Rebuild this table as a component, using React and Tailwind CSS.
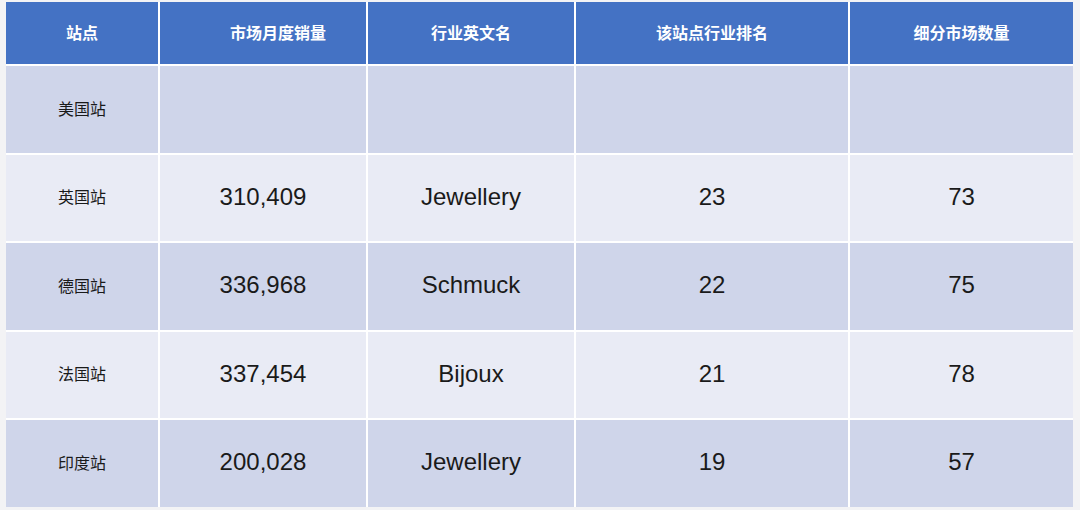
const headers = ["站点", "市场月度销量", "行业英文名", "该站点行业排名", "细分市场数量"];

const rows = [
  ["美国站", "", "", "", ""],
  ["英国站", "310,409", "Jewellery", "23", "73"],
  ["德国站", "336,968", "Schmuck", "22", "75"],
  ["法国站", "337,454", "Bijoux", "21", "78"],
  ["印度站", "200,028", "Jewellery", "19", "57"],
];

const cjk = { fontFamily: '"Noto Sans CJK SC", "Liberation Sans", sans-serif' };
const num = { fontFamily: '"Liberation Sans", Arial, sans-serif' };

export default function App() {
  return (
    <div className="w-[1080px] h-[510px] bg-[#f3f3f5] pt-[2px] pl-[6px] overflow-hidden">
      <div className="w-[1067px] bg-white grid grid-cols-[152px_206px_206px_272px_223px] gap-[2px] grid-rows-[62px_repeat(5,86.5px)]">
        {headers.map((h, i) => (
          <div
            key={h}
            className={
              "bg-[#4472c4] text-white font-bold text-[16px] leading-none flex items-center justify-center pb-[3px] " +
              (i === 1 ? "pl-[30px]" : "")
            }
            style={cjk}
          >
            {h}
          </div>
        ))}
        {rows.map((r, ri) =>
          r.map((c, ci) => (
            <div
              key={ri + "-" + ci}
              className={
                (ri % 2 === 0 ? "bg-[#cfd5ea]" : "bg-[#e9ebf5]") +
                " flex items-center justify-center leading-none text-[#1a1a1a] " +
                (ci === 0 ? "text-[16px] pb-[3px]" : "text-[24px] pb-[2px]")
              }
              style={ci === 0 ? cjk : num}
            >
              {c}
            </div>
          ))
        )}
      </div>
    </div>
  );
}
